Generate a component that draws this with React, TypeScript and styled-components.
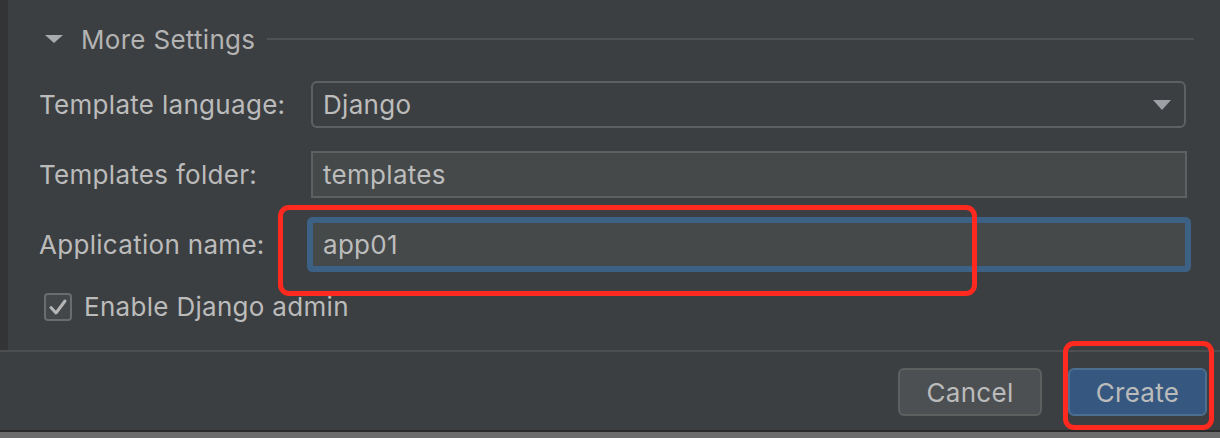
import React from "react";
import styled, { createGlobalStyle } from "styled-components";

const GlobalStyle = createGlobalStyle`
  html, body { margin: 0; padding: 0; background: #3c3f41; }
  body { font-family: Inter, "Noto Sans", "Liberation Sans", sans-serif; }
  * { box-sizing: border-box; }
`;

const Page = styled.div`
  position: relative;
  width: 1220px;
  height: 438px;
  background: #3c3f41;
  display: flex;
  flex-direction: column;
  overflow: hidden;
  color: #bbbbbb;
  font-size: 26px;
  letter-spacing: 0.3px;
`;

const Content = styled.div`
  height: 350px;
  display: flex;
`;

const Strip = styled.div`
  width: 8px;
  background: #323436;
`;

const Form = styled.div`
  flex: 1;
  padding: 19px 26px 0 31px;
  display: flex;
  flex-direction: column;
`;

const Header = styled.div`
  height: 40px;
  display: flex;
  align-items: center;
  margin-bottom: 22px;
  padding-left: 6px;
`;

const Caret = styled.span`
  width: 0;
  height: 0;
  border-left: 9px solid transparent;
  border-right: 9px solid transparent;
  border-top: 8px solid #a9abad;
  margin-right: 18px;
`;

const HeaderTitle = styled.span`
  color: #b3b3b3;
  white-space: nowrap;
`;

const HeaderLine = styled.span`
  flex: 1;
  height: 2px;
  background: #4f5254;
  margin-left: 12px;
`;

const Rows = styled.div`
  display: grid;
  grid-template-columns: 272px 1fr;
  row-gap: 23px;
  align-items: center;
  margin-right: 8px;
`;

const Label = styled.label`
  white-space: nowrap;
  color: #bbbbbb;
`;

const Field = styled.div<{ $variant?: "combo" | "text" | "focus" }>`
  height: 47px;
  display: flex;
  align-items: center;
  padding: 0 13px 0 10px;
  color: #bcbcbc;
  background: ${(p) => (p.$variant === "combo" ? "#3c3f41" : "#45494a")};
  border: 2px solid
    ${(p) => (p.$variant === "focus" ? "#3d6185" : "#5e6062")};
  border-radius: ${(p) =>
    p.$variant === "combo" ? "6px" : p.$variant === "focus" ? "2px" : "0"};
  box-shadow: ${(p) =>
    p.$variant === "focus" ? "0 0 0 4px #3d6185" : "none"};
  margin-right: ${(p) => (p.$variant === "combo" ? "0" : "-1px")};
`;

const FieldText = styled.span`
  flex: 1;
`;

const ComboArrow = styled.span`
  width: 0;
  height: 0;
  border-left: 9px solid transparent;
  border-right: 9px solid transparent;
  border-top: 10px solid #9da0a4;
`;

const CheckRow = styled.div`
  grid-column: 1 / -1;
  display: flex;
  align-items: center;
  gap: 12px;
  padding-left: 5px;
`;

const CheckBox = styled.span`
  width: 28px;
  height: 28px;
  border: 2px solid #6a6c6e;
  border-radius: 4px;
  background: #43474a;
  display: flex;
  align-items: center;
  justify-content: center;
`;

const Separator = styled.div`
  height: 2px;
  background: #4c4e50;
`;

const Footer = styled.div`
  height: 78px;
  display: flex;
  align-items: center;
  justify-content: flex-end;
  gap: 26px;
  padding-right: 13px;
  padding-top: 2px;
`;

const Button = styled.button<{ $primary?: boolean }>`
  height: 48px;
  width: ${(p) => (p.$primary ? "139px" : "144px")};
  border-radius: 6px;
  font-family: inherit;
  font-size: 26px;
  letter-spacing: 0.3px;
  color: #bbbbbb;
  background: ${(p) => (p.$primary ? "#365880" : "#4c5052")};
  border: 2px solid ${(p) => (p.$primary ? "#4c6e91" : "#5e6060")};
  display: flex;
  align-items: center;
  justify-content: center;
  padding: 0;
`;

const BottomEdge = styled.div`
  height: 8px;
  border-top: 2px solid #2a2a2b;
  background: #6c6c6c;
`;

const Highlight = styled.div`
  position: absolute;
  border: 5px solid #ff2a1f;
  border-radius: 11px;
  pointer-events: none;
`;

const CheckIcon = () => (
  <svg width="20" height="18" viewBox="0 0 20 18">
    <path
      d="M3 9.5 L8 15 L17 3"
      fill="none"
      stroke="#b5b5b5"
      strokeWidth="3"
      strokeLinecap="round"
      strokeLinejoin="round"
    />
  </svg>
);

export default function App() {
  return (
    <>
      <GlobalStyle />
      <Page>
        <Content>
          <Strip />
          <Form>
            <Header>
              <Caret />
              <HeaderTitle>More Settings</HeaderTitle>
              <HeaderLine />
            </Header>
            <Rows>
              <Label>Template language:</Label>
              <Field $variant="combo">
                <FieldText>Django</FieldText>
                <ComboArrow />
              </Field>
              <Label>Templates folder:</Label>
              <Field $variant="text">
                <FieldText>templates</FieldText>
              </Field>
              <Label>Application name:</Label>
              <Field $variant="focus">
                <FieldText>app01</FieldText>
              </Field>
              <CheckRow>
                <CheckBox>
                  <CheckIcon />
                </CheckBox>
                <span>Enable Django admin</span>
              </CheckRow>
            </Rows>
          </Form>
        </Content>
        <Separator />
        <Footer>
          <Button>Cancel</Button>
          <Button $primary>Create</Button>
        </Footer>
        <BottomEdge />
        <Highlight style={{ left: 278, top: 205, width: 699, height: 91 }} />
        <Highlight style={{ left: 1063, top: 341, width: 151, height: 89 }} />
      </Page>
    </>
  );
}
